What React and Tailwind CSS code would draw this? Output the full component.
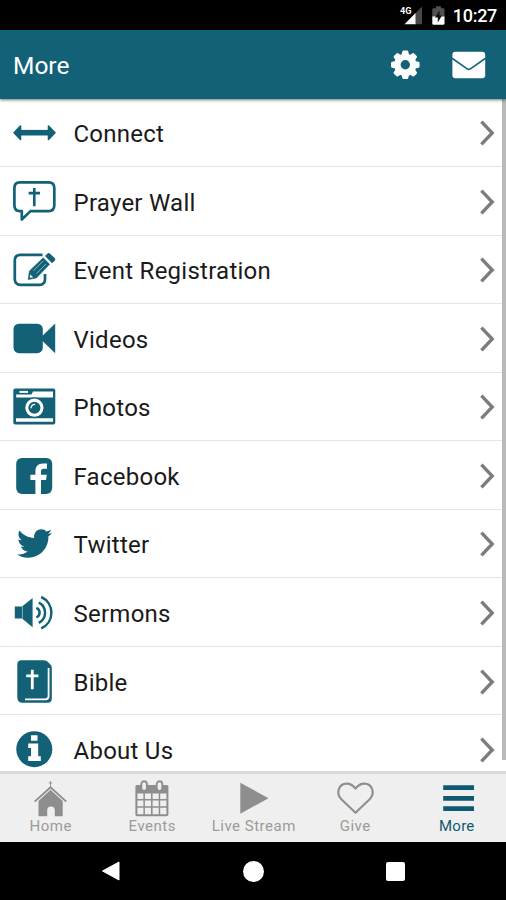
import { FaTwitter } from "react-icons/fa";

const ConnectIcon = () => (
  <g>
    <path d="M20 34.7H49" stroke="currentColor" strokeWidth="5.6" />
    <path d="M14 34.7 20.5 28V41.4ZM55 34.7 48.5 28V41.4Z" fill="currentColor" stroke="currentColor" strokeWidth="1.6" strokeLinejoin="round" />
  </g>
);

const PrayerIcon = () => (
  <g fill="none" stroke="currentColor">
    <path d="M19.7 15.3H48.5Q54.3 15.3 54.3 21.1V38.3Q54.3 44.1 48.5 44.1H30.5L21.8 52.5V44.1H19.8Q14.4 44.1 14.4 38.3V21.1Q14.4 15.3 19.7 15.3Z" strokeWidth="2.7" strokeLinejoin="round" />
    <path d="M34.3 21V39.2M28.6 26.1H40" strokeWidth="2.6" />
  </g>
);

const EventIcon = () => (
  <g>
    <path d="M42.5 19.8H20.5Q14.8 19.8 14.8 25.5V44Q14.8 49.8 20.5 49.8H39.5Q45 49.8 45 44V39" fill="none" stroke="currentColor" strokeWidth="2.7" />
    <path d="M28.2 44.6 29.4 36 43.2 22.8 49.6 29.3 36.4 43Z" fill="currentColor" stroke="currentColor" strokeWidth="0.6" />
    <path d="M45 21 47.3 18.7Q48.7 17.3 50 18.7L54.6 23.1Q56 24.6 54.6 25.8L52 28.3Z" fill="currentColor" />
    <path d="M33.4 35.7 43.2 26M36.4 38.6 46 29" fill="none" stroke="#fff" strokeWidth="0.5" />
    <path d="M30.2 39.4 33.2 42.3 29.9 42.7Z" fill="#fff" />
  </g>
);

const VideoIcon = () => (
  <g fill="currentColor">
    <rect x="13.5" y="19.7" width="29.3" height="29.5" rx="5.5" />
    <path d="M42 32.2 55.2 19.5V49.3L42 36.6Z" />
  </g>
);

const PhotoIcon = () => (
  <g>
    <rect x="13.3" y="16.5" width="42" height="36" rx="2" fill="currentColor" />
    <path d="M33 19.5H53V25.5H16.2V22.5H31.5Z" fill="#fff" />
    <path d="M19.5 18.9H28V20.9H19.5Z" fill="#fff" />
    <path d="M16 46.3H53V49.7H16Z" fill="#fff" />
    <circle cx="34.4" cy="35.7" r="10.5" fill="currentColor" />
    <circle cx="34.4" cy="35.7" r="7.6" fill="none" stroke="#fff" strokeWidth="3.1" />
    <path d="M31 36.2Q31.2 32.5 35 32.3" fill="none" stroke="#fff" strokeWidth="1.2" />
  </g>
);

const FacebookIcon = () => (
  <g>
    <rect x="16.2" y="16.9" width="36" height="36" rx="5.8" fill="currentColor" />
    <path d="M35.4 53V39.1H30.4V33.7H35.4V30.2Q35.4 22.4 43 22.4H47V27.7H43.6Q41 27.7 41 30.4V33.7H46.8L46 39.1H41V53Z" fill="#fff" />
  </g>
);

const TwitterIcon = () => <FaTwitter x="17" y="17" size={35} />;

const SermonIcon = () => (
  <g>
    <path d="M14.8 28.6H22L32.6 20V49.2L22 40.6H14.8Z" fill="currentColor" />
    <path d="M22.4 28.5V40.7" stroke="#fff" strokeWidth="0.5" />
    <g fill="none" stroke="currentColor" strokeWidth="2.5">
      <path d="M36.4 29.8A5.2 5.2 0 0 1 36.4 39.4" />
      <path d="M38.8 24.6A11.3 11.3 0 0 1 38.8 44.8" />
      <path d="M41.2 19A17.2 17.2 0 0 1 41.2 50.4" />
    </g>
  </g>
);

const BibleIcon = () => (
  <g>
    <path d="M21.5 13.2H43.5Q46.5 13.2 48.5 15.5L50.8 18Q51.8 19.2 51.8 21V51.5Q51.8 55.8 47.5 55.8H22.5Q17.3 55.8 17.3 50V17.5Q17.3 13.2 21.5 13.2Z" fill="currentColor" />
    <path d="M48.6 21V49.3Q48.6 52.3 45.3 52.3H25" fill="none" stroke="#fff" strokeWidth="1.8" />
    <path d="M32.3 22.7V42.2M26.2 28.8H38.4" stroke="#fff" strokeWidth="2.8" />
  </g>
);

const InfoIcon = () => (
  <g>
    <circle cx="34.3" cy="34.2" r="18" fill="currentColor" />
    <path d="M31 20.2H37.5V25.8H31ZM28.2 28.4H38.2V41.3H40.8V45.9H28.2V41.3H31V33H28.2Z" fill="#fff" />
  </g>
);

const items = [
  { name: "Connect", icon: ConnectIcon },
  { name: "Prayer Wall", icon: PrayerIcon },
  { name: "Event Registration", icon: EventIcon },
  { name: "Videos", icon: VideoIcon },
  { name: "Photos", icon: PhotoIcon },
  { name: "Facebook", icon: FacebookIcon },
  { name: "Twitter", icon: TwitterIcon },
  { name: "Sermons", icon: SermonIcon },
  { name: "Bible", icon: BibleIcon },
  { name: "About Us", icon: InfoIcon },
];

const HomeTab = () => (
  <g>
    <path d="M19.5 0V6M17.8 2H21.2" stroke="currentColor" strokeWidth="0.9" />
    <path d="M3.7 20.6 19.5 6.2 35.3 20.6" fill="none" stroke="currentColor" strokeWidth="1.9" />
    <path d="M19.5 8.8 31.7 20V35.3H23.8V29.5Q23.8 25.5 20 25.5Q16.2 25.5 16.2 29.5V35.3H7.5V20Z" fill="currentColor" />
  </g>
);

const EventsTab = () => (
  <g>
    <path d="M4.5 4H35Q36.4 4 36.4 5.5V33.5Q36.4 35.3 34.6 35.3H5Q3.4 35.3 3.4 33.5V5.5Q3.4 4 4.5 4Z" fill="currentColor" />
    <path d="M5.4 12.5H11.4V18H5.4ZM12.9 12.5H19V18H12.9ZM20.6 12.5H26.7V18H20.6ZM28.2 12.5H34.4V18H28.2ZM5.4 19.5H11.4V25.2H5.4ZM12.9 19.5H19V25.2H12.9ZM20.6 19.5H26.7V25.2H20.6ZM28.2 19.5H34.4V25.2H28.2ZM5.4 26.8H11.4V33.2H5.4ZM12.9 26.8H19V33.2H12.9ZM20.6 26.8H26.7V33.2H20.6ZM28.2 26.8H34.4V33.2H28.2Z" fill="#efefef" />
    <rect x="9.3" y="0.3" width="5.6" height="9.6" rx="2.8" fill="#efefef" stroke="currentColor" strokeWidth="1.9" />
    <rect x="24.7" y="0.3" width="5.6" height="9.6" rx="2.8" fill="#efefef" stroke="currentColor" strokeWidth="1.9" />
  </g>
);

const StreamTab = () => <path d="M6.3 1.8 34.5 17.2 6.3 32.8Z" fill="currentColor" />;

const GiveTab = () => (
  <path d="M20.5 31.8 6.1 18C.8 12.4 3.5 2.6 11.7 2.6C15.6 2.6 18.3 4.7 20.5 7.6C22.7 4.7 25.4 2.6 29.3 2.6C37.5 2.6 40.2 12.4 34.9 18Z" fill="none" stroke="currentColor" strokeWidth="2.1" strokeLinejoin="round" />
);

const MoreTab = () => <path d="M6.2 6.7H37M6.2 17.3H37M6.2 27.7H37" stroke="currentColor" strokeWidth="4.8" />;

const tabs = [
  { name: "Home", icon: HomeTab },
  { name: "Events", icon: EventsTab },
  { name: "Live Stream", icon: StreamTab },
  { name: "Give", icon: GiveTab },
  { name: "More", icon: MoreTab, active: true },
];

const StatusBar = () => (
  <div className="flex h-[30px] shrink-0 items-center justify-end bg-black pr-[9px] text-white">
    <svg width="50" height="30" viewBox="398 0 50 30" className="mr-[5px]">
      <path d="M422 6.5V24.2H415V13.8Z" fill="#484848" />
      <path d="M415.5 13V24.2H404.5Z" fill="#fff" />
      <text x="400" y="13.6" fontFamily="Roboto" fontSize="9.5" fontWeight="700" fill="#fff" textLength="11.5" lengthAdjust="spacingAndGlyphs">4G</text>
      <path d="M436 6.3H441V8.3H443.2Q444.5 8.3 444.5 9.6V17H432.3V9.6Q432.3 8.3 433.6 8.3H436Z" fill="#505050" />
      <path d="M432.3 16.5H444.5V23.6Q444.5 24.8 443.2 24.8H433.6Q432.3 24.8 432.3 23.6Z" fill="#fff" />
      <path d="M439.5 10.5 435 17.5H437.8V22.5L442 15.5H439.5Z" fill="#111" />
    </svg>
    <span className="mt-[2px] text-[18px] leading-[30px] font-medium tracking-[-0.3px]">10:27</span>
  </div>
);

const Header = () => (
  <div className="z-10 flex h-[69px] shrink-0 items-center justify-between bg-[#126177] pr-5 pl-[13px] text-white shadow-[0_1px_3px_rgba(0,0,0,0.55)]">
    <h1 className="mt-[3px] text-[24.5px] leading-8">More</h1>
    <div className="flex items-center gap-8">
      <svg width="30" height="30" viewBox="-15.3 -14.8 30 30">
        <circle r="7.9" fill="none" stroke="#fff" strokeWidth="6.4" />
        {[0, 45, 90, 135, 180, 225, 270, 315].map((angle) => (
          <path key={angle} transform={`rotate(${angle})`} d="M-3.9 -9 -3 -13.2Q-2.8 -14.3 -1.8 -14.3H1.8Q2.8 -14.3 3 -13.2L3.9 -9Z" fill="#fff" />
        ))}
      </svg>
      <svg width="34" height="28" viewBox="0 0 34 28">
        <rect x=".4" y=".8" width="32.8" height="26.4" rx="3" fill="#fff" />
        <path d="M0 7.2 15.2 17.8Q16.8 18.9 18.4 17.8L33.6 7.2" fill="none" stroke="#126177" strokeWidth="1.6" />
      </svg>
    </div>
  </div>
);

const App = () => {
  return (
    <div className="flex h-[900px] w-[506px] flex-col overflow-hidden bg-white font-['Roboto',sans-serif]">
      <StatusBar />
      <Header />
      <div className="relative h-[672px] shrink-0 overflow-hidden">
        <ul className="-mt-[0.5px]">
          {items.map(({ name, icon: Icon }) => (
            <li key={name} className="flex h-[68.54px] items-center border-b-[1.5px] border-[#e5e5e5] pr-[11px]">
              <svg width="68" height="68" viewBox="0 0 68 68" className="mr-[5.5px] shrink-0 text-[#126177]">
                <Icon />
              </svg>
              <span className="mt-[4px] flex-1 text-[24px] leading-8 tracking-[0.25px] text-[#1a1a1a]">{name}</span>
              <svg width="16" height="28" viewBox="0 0 16 28" className="mt-[2px]">
                <path d="M2.4 2.6 13.2 14 2.4 25.4" fill="none" stroke="#7c7c7c" strokeWidth="3.4" />
              </svg>
            </li>
          ))}
        </ul>
        <div className="absolute top-0 right-0 h-[661px] w-[4px] bg-[#b9b9b9]" />
      </div>
      <div className="flex h-[71px] shrink-0 border-t-[3px] border-[#dadada] bg-[#efefef]">
        {tabs.map(({ name, icon: Icon, active }) => (
          <div key={name} className={`flex w-[101.5px] shrink-0 flex-col items-center pt-[7px] ${active ? "text-[#0f5a72]" : "text-[#8e8e8e]"}`}>
            <svg width="40" height="36" viewBox="0 0 40 36" className="overflow-visible">
              <Icon />
            </svg>
            <span className={`text-[15px] leading-[18px] whitespace-nowrap ${active ? "tracking-[0.3px]" : "tracking-[0.5px] text-[#9b9b9b]"}`}>{name}</span>
          </div>
        ))}
      </div>
      <div className="flex h-[58px] shrink-0 items-center justify-between bg-black pr-[101px] pl-[101px]">
        <svg width="20" height="20" viewBox="0 0 20 20">
          <path d="M1.5 10 18 1V19Z" fill="#fff" stroke="#fff" strokeLinejoin="round" />
        </svg>
        <div className="size-[21px] rounded-full bg-white" />
        <div className="size-[19px] rounded-[2px] bg-white" />
      </div>
    </div>
  );
};

export default App;
